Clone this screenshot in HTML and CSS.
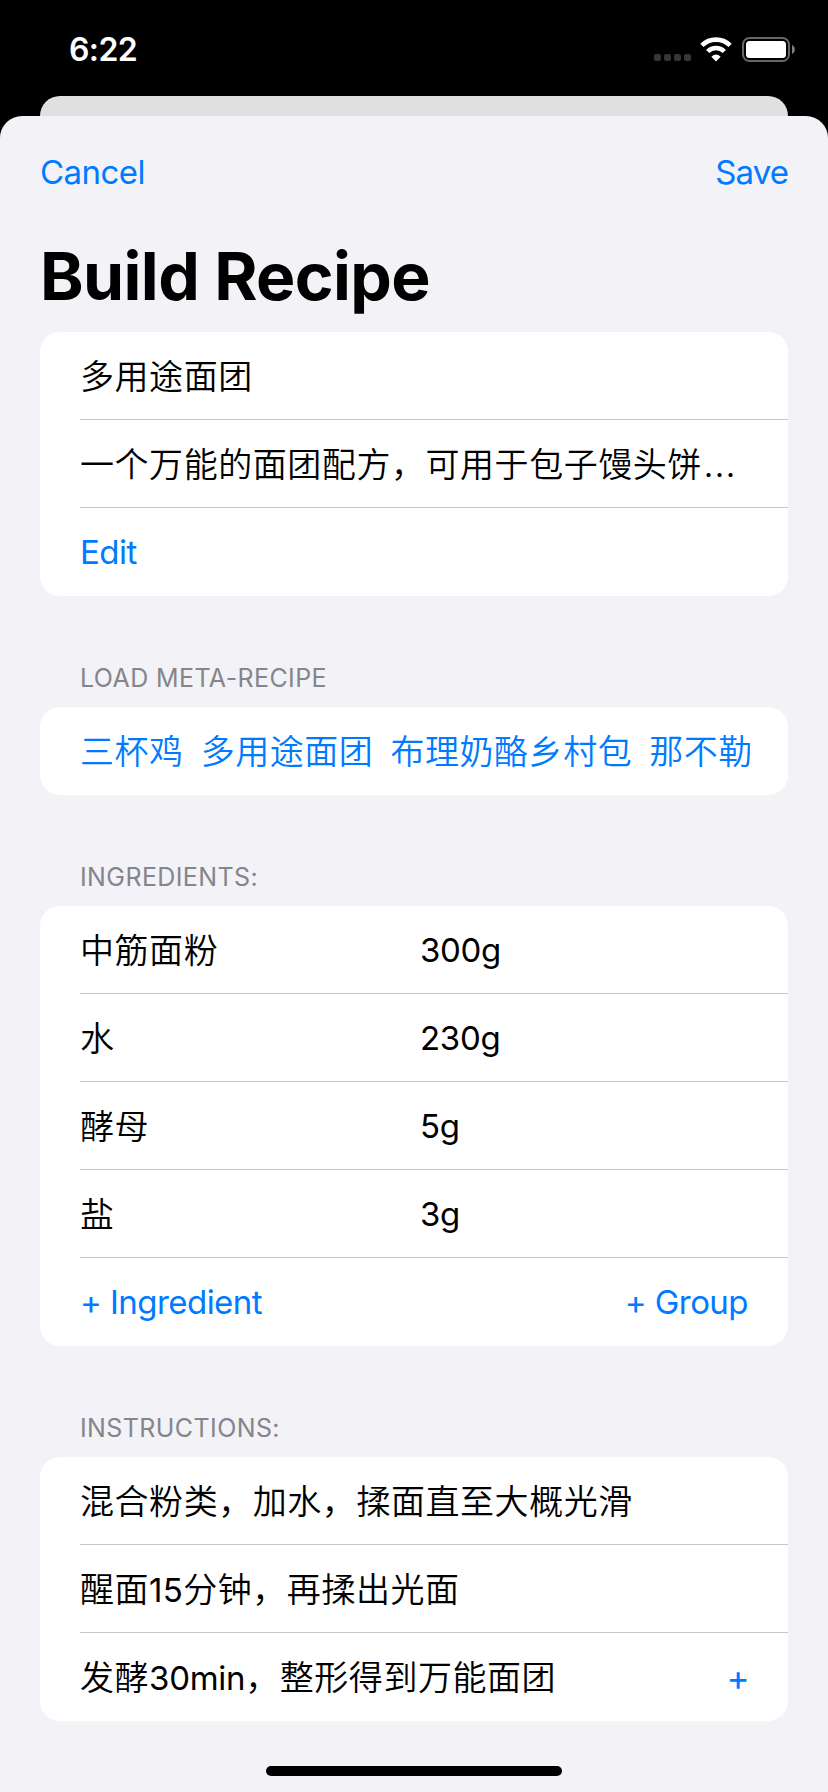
FILE: index.html
```
<!DOCTYPE html>
<html lang="zh-CN"><head><meta charset="utf-8"><title>Build Recipe</title><link rel="stylesheet" href="styles.css"></head>
<body>
<div class="status"><span class="time">6:22</span>
<span class="icons"><i class="dots"><b></b><b></b><b></b><b></b></i>
<svg class="wifi" width="32" height="25" viewBox="0 0 32 25"><g fill="none" stroke="#fff" stroke-width="4.6"><path d="M1.9 8.400A20 20 0 0 1 30.100 8.400"/><path d="M7.700 14.500A11.700 11.700 0 0 1 24.300 14.500"/></g><path d="M16 24.500L11.300 19.700Q16 15.300 20.700 19.700Z" fill="#fff"/></svg>
<svg class="battery" width="53" height="25" viewBox="0 0 53 25"><rect x="1" y="1" width="46" height="23" rx="6.500" fill="none" stroke="#666" stroke-width="2"/><rect x="4" y="4" width="40" height="17" rx="3.500" fill="#fff"/><path d="M50 8c1.800.9 2.800 2.500 2.800 4.500s-1 3.600-2.800 4.500z" fill="#808080"/></svg></span></div>
<div class="behind"></div>
<main class="sheet">
<nav class="nav"><span>Cancel</span><span class="save">Save</span></nav>
<h1>Build Recipe</h1>
<section class="card"><div class="row cjk">多用途面团</div><div class="row cjk">一个万能的面团配方，可用于包子馒头饼<span class="more">…</span></div><div class="row link">Edit</div></section>
<h2>LOAD META-RECIPE</h2>
<section class="card"><div class="row link cjk chips"><span>三杯鸡</span><span>多用途面团</span><span>布理奶酪乡村包</span><span>那不勒</span></div></section>
<h2>INGREDIENTS:</h2>
<section class="card"><div class="row pair"><span class="cjk">中筋面粉</span><span>300g</span></div><div class="row pair"><span class="cjk">水</span><span>230g</span></div><div class="row pair"><span class="cjk">酵母</span><span>5g</span></div><div class="row pair"><span class="cjk">盐</span><span>3g</span></div><div class="row link split"><span>+ Ingredient</span><span>+ Group</span></div></section>
<h2>INSTRUCTIONS:</h2>
<section class="card"><div class="row cjk">混合粉类，加水，揉面直至大概光滑</div><div class="row cjk">醒面<span class="latin digits">15</span>分钟，再揉出光面</div><div class="row split"><span class="cjk">发酵<span class="latin">30min</span>，整形得到万能面团</span><span class="link plus">+</span></div></section>
</main>
<div class="home"></div>
</body></html>
```
FILE: styles.css
```
*{box-sizing:border-box}
body{margin:0;width:828px;height:1792px;background:#000;overflow:hidden;position:relative;display:flex;flex-direction:column;font-family:Inter,"Noto Sans CJK SC",sans-serif;font-size:33px;letter-spacing:-.55px;color:#000}
.status{height:96px;flex:none;display:flex;justify-content:space-between;padding:0 33px 0 69px;color:#fff}
.time{font-size:32px;font-weight:600;line-height:100px;letter-spacing:-.6px}
.icons{display:flex;align-items:flex-start;padding-top:37px}
.dots{display:flex;gap:3px;margin:17px 9px 0 0}
.dots b{width:7px;height:7px;border-radius:2px;background:#363636}
.battery{margin-left:10px}
.behind{height:20px;flex:none;margin:0 40px;background:#e0e0e0;border-radius:20px 20px 0 0}
.sheet{flex:1;background:#f2f2f7;border-radius:22px 22px 0 0;padding:0 40px}
.nav{height:112px;display:flex;justify-content:space-between;color:#007aff;line-height:112px}
.save{letter-spacing:-.9px}
h1{margin:0;height:104px;font-size:66px;line-height:96px;font-weight:700;letter-spacing:-.6px}
.card{background:#fff;border-radius:20px;overflow:hidden;padding-left:40px}
.row{height:88px;line-height:88px;border-bottom:1px solid #c6c6c8;padding-right:40px;white-space:nowrap}
.row:last-child{border:0}
.cjk{font-size:34px;font-weight:350;line-height:90px;letter-spacing:.55px}
.latin{font-size:33px;font-weight:400;letter-spacing:-.3px}
.digits{letter-spacing:.3px}
.more{font-size:39px;line-height:1;letter-spacing:1px;margin-left:1px}
.link{color:#007aff}
.split{display:flex;justify-content:space-between}
.plus{font-size:35px;margin-right:-1px}
.pair{display:grid;grid-template-columns:340px 1fr;grid-template-rows:88px;letter-spacing:-.3px}
.chips{display:flex;gap:17px;overflow:hidden;margin-right:38px;padding:0}
h2{margin:0;height:111px;padding:64px 0 0 40px;font-size:25px;line-height:36px;font-weight:400;letter-spacing:.4px;color:#85858b}
.home{position:absolute;left:266px;top:1766px;width:296px;height:10px;border-radius:5px;background:#000}
```
